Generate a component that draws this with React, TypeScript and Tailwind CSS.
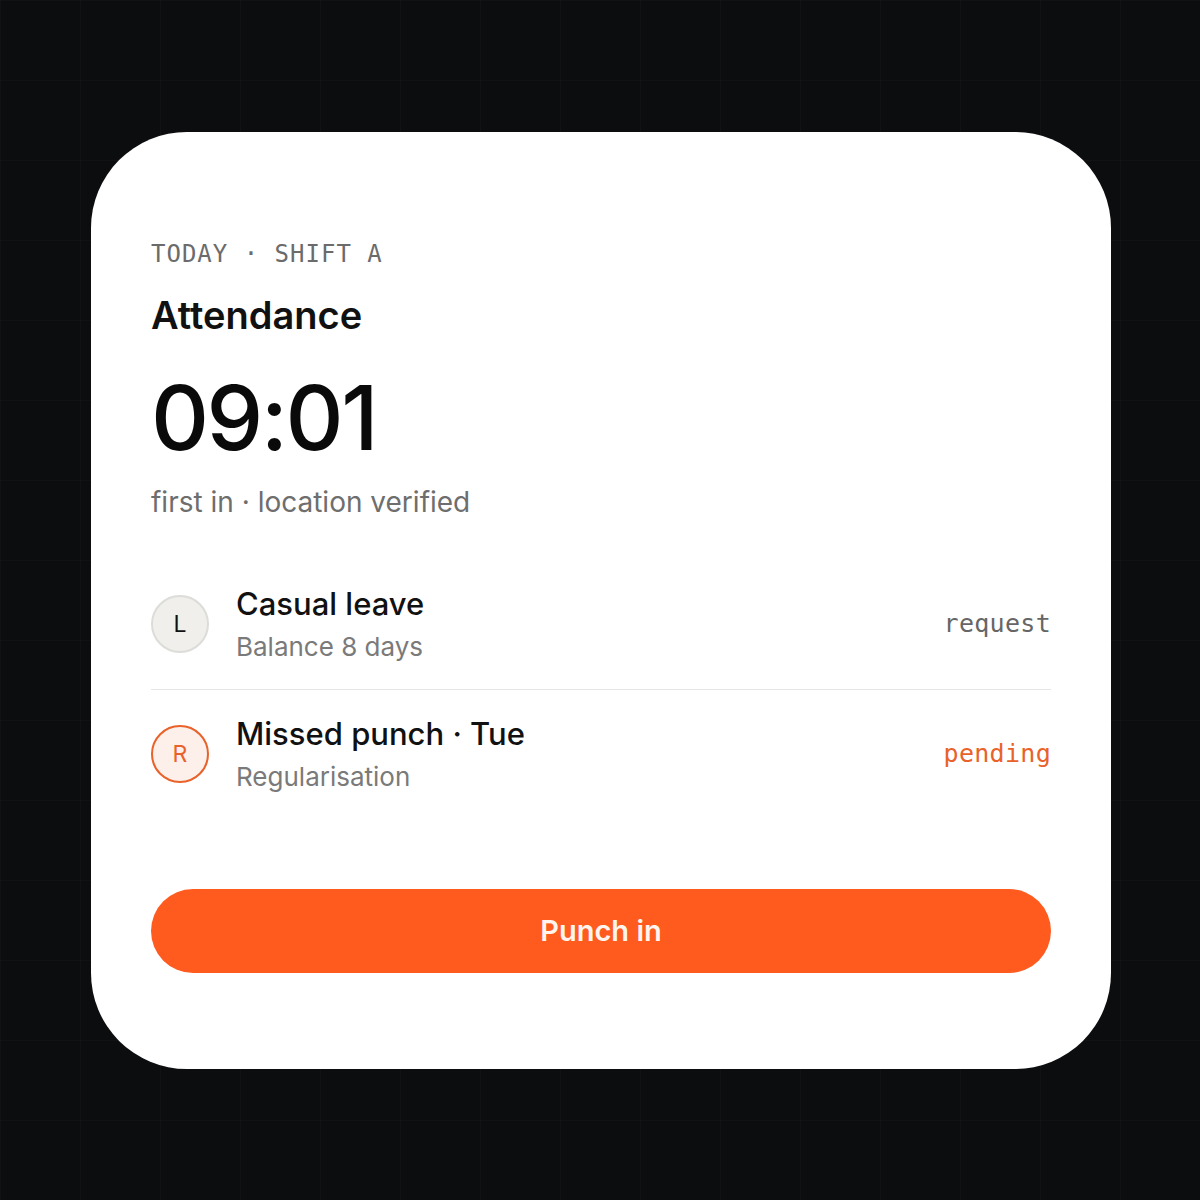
/* Attendance card — today's punch, leave + regularisation rows, punch-in button */

const sans = { fontFamily: 'Inter, "Noto Sans", sans-serif' }
const mono = { fontFamily: '"DejaVu Sans Mono", "Liberation Mono", monospace' }

type Row = {
  letter: string
  title: string
  sub: string
  action: string
  accent?: boolean
}

const rows: Row[] = [
  { letter: 'L', title: 'Casual leave', sub: 'Balance 8 days', action: 'request' },
  { letter: 'R', title: 'Missed punch · Tue', sub: 'Regularisation', action: 'pending', accent: true },
]

export default function App() {
  return (
    <div
      className="min-h-screen w-full flex items-center justify-center bg-[#0c0d0f] bg-[linear-gradient(rgba(255,255,255,0.02)_1px,transparent_1px),linear-gradient(90deg,rgba(255,255,255,0.02)_1px,transparent_1px)] bg-[size:80px_80px]"
      style={sans}
    >
      <div className="ml-[2px] w-[1020px] rounded-[96px] bg-white px-[60px] pt-[104px] pb-[96px]">
        {/* 标题区 */}
        <p className="text-[24px] leading-[36px] tracking-[1px] text-[#6b6b6b]" style={mono}>
          TODAY · SHIFT A
        </p>
        <h1 className="mt-[21px] text-[38px] leading-[44px] font-semibold text-[#111]">Attendance</h1>
        <div className="mt-[36px] text-[90px] leading-[90px] font-medium text-[#0a0a0a] tracking-[-2.5px]">
          09:01
        </div>
        <p className="mt-[21px] text-[28px] leading-[36px] text-[#6e6e6e]">first in · location verified</p>

        {/* 列表 */}
        <div className="mt-[40px] divide-y divide-[#e6e6e6]">
          {rows.map((r) => (
            <div key={r.letter} className="flex items-center py-[25px]">
              <div
                className={
                  r.accent
                    ? 'w-[58px] h-[58px] rounded-full border-2 border-[#e8622a] bg-[#fdf0ea] text-[#e8622a] flex items-center justify-center text-[23px] leading-none'
                    : 'w-[58px] h-[58px] rounded-full border-2 border-[#dcdcd8] bg-[#f0efeb] text-[#111] flex items-center justify-center text-[23px] leading-none'
                }
              >
                {r.letter}
              </div>
              <div className="ml-[27px] flex-1">
                <p className="text-[31px] leading-[38px] font-medium text-[#111]">{r.title}</p>
                <p className="mt-[7px] text-[26px] leading-[34px] text-[#7a7a7a]">{r.sub}</p>
              </div>
              <span
                className={
                  r.accent
                    ? 'text-[25px] tracking-[0.3px] text-[#e8622a]'
                    : 'text-[25px] tracking-[0.3px] text-[#666]'
                }
                style={mono}
              >
                {r.action}
              </span>
            </div>
          ))}
        </div>

        {/* 打卡按钮 */}
        <button className="mt-[70px] w-full h-[84px] rounded-full bg-[#ff5b1f] text-[#fff5ee] text-[29px] font-semibold">
          Punch in
        </button>
      </div>
    </div>
  )
}
